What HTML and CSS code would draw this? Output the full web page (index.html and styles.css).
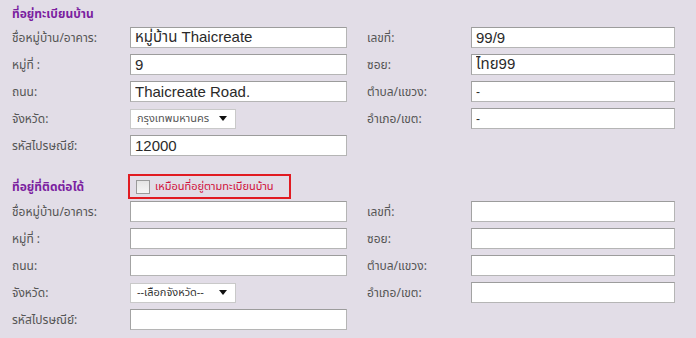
FILE: index.html
```html
<!DOCTYPE html>
<html lang="th">
<head>
<meta charset="utf-8">
<link rel="stylesheet" href="styles.css">
</head>
<body>
<div class="page">
  <section class="sec sec-home">
    <div class="sec-head">
      <h3 class="title">ที่อยู่ทะเบียนบ้าน</h3>
    </div>
    <div class="grid">
      <label class="lbl">ชื่อหมู่บ้าน/อาคาร:</label>
      <input class="txt" type="text" value="หมู่บ้าน Thaicreate">
      <span></span>
      <label class="lbl">เลขที่:</label>
      <input class="txt txt-r" type="text" value="99/9">

      <label class="lbl">หมู่ที่ :</label>
      <input class="txt" type="text" value="9">
      <span></span>
      <label class="lbl">ซอย:</label>
      <input class="txt txt-r" type="text" value="ไทย99">

      <label class="lbl">ถนน:</label>
      <input class="txt" type="text" value="Thaicreate Road.">
      <span></span>
      <label class="lbl">ตำบล/แขวง:</label>
      <input class="txt txt-r small" type="text" value="-">

      <label class="lbl">จังหวัด:</label>
      <div class="sel"><span class="sel-text thin">กรุงเทพมหานคร</span><span class="arrow"></span></div>
      <span></span>
      <label class="lbl">อำเภอ/เขต:</label>
      <input class="txt txt-r small" type="text" value="-">

      <label class="lbl">รหัสไปรษณีย์:</label>
      <input class="txt" type="text" value="12000">
    </div>
  </section>

  <section class="sec sec-contact">
    <div class="sec-head">
      <h3 class="title">ที่อยู่ที่ติดต่อได้</h3>
      <div class="same-box">
        <span class="chk"></span>
        <span class="same-text">เหมือนที่อยู่ตามทะเบียนบ้าน</span>
      </div>
    </div>
    <div class="grid">
      <label class="lbl">ชื่อหมู่บ้าน/อาคาร:</label>
      <input class="txt" type="text">
      <span></span>
      <label class="lbl">เลขที่:</label>
      <input class="txt txt-r" type="text">

      <label class="lbl">หมู่ที่ :</label>
      <input class="txt" type="text">
      <span></span>
      <label class="lbl">ซอย:</label>
      <input class="txt txt-r" type="text">

      <label class="lbl">ถนน:</label>
      <input class="txt" type="text">
      <span></span>
      <label class="lbl">ตำบล/แขวง:</label>
      <input class="txt txt-r" type="text">

      <label class="lbl">จังหวัด:</label>
      <div class="sel"><span class="sel-text">--เลือกจังหวัด--</span><span class="arrow"></span></div>
      <span></span>
      <label class="lbl">อำเภอ/เขต:</label>
      <input class="txt txt-r" type="text">

      <label class="lbl">รหัสไปรษณีย์:</label>
      <input class="txt" type="text">
    </div>
  </section>
</div>
</body>
</html>
```

FILE: styles.css
```css
html, body {
  margin: 0;
  padding: 0;
}
body {
  background: #e2dde7;
  font-family: Tahoma, "Noto Sans Thai", "Noto Sans", "DejaVu Sans", sans-serif;
  color: #555;
  width: 696px;
  height: 338px;
  overflow: hidden;
}
.page {
  padding: 0 0 0 12px;
}
.sec-head {
  display: flex;
  align-items: center;
}
.sec-home .sec-head {
  height: 27px;
}
.sec-contact {
  margin-top: 18px;
}
.sec-contact .sec-head {
  height: 25px;
  margin-bottom: 2px;
}
.title {
  margin: 0;
  font-size: 12px;
  font-weight: bold;
  color: #7b1fa0;
  width: 116px;
}
.same-box {
  display: flex;
  align-items: center;
  box-sizing: border-box;
  width: 163px;
  height: 25px;
  border: 2px solid #e11b22;
  padding-left: 6px;
}
.chk {
  width: 12px;
  height: 12px;
  border: 1px solid #9a9a9a;
  background: linear-gradient(#e4e4e4, #f6f6f6);
  margin-right: 5px;
}
.same-text {
  color: #d0103a;
  font-size: 11px;
}
.grid {
  display: grid;
  grid-template-columns: 118px 217px 20px 104px 204px;
  grid-auto-rows: 21px;
  row-gap: 6px;
  align-items: center;
}
.lbl {
  font-size: 12px;
  color: #555;
}
.txt {
  box-sizing: border-box;
  height: 21px;
  width: 100%;
  margin: 0;
  border: 1px solid #b5b5b5;
  border-top-color: #9c9c9c;
  border-left-color: #a3a3a3;
  background: #fff;
  padding: 0 4px;
  font-family: "Liberation Sans", Arial, "Noto Sans Thai", sans-serif;
  font-size: 15px;
  color: #2a2a2a;
  outline: none;
}
.txt.small {
  font-size: 12px;
}
.sel {
  box-sizing: border-box;
  width: 106px;
  height: 20px;
  background: #fff;
  border: 1px solid #c9c9c9;
  display: flex;
  align-items: center;
  justify-content: space-between;
  padding: 0 8px 0 6px;
}
.sel-text {
  font-size: 11px;
  color: #333;
  white-space: nowrap;
}
.sel-text.thin {
  color: #555;
}
.arrow {
  width: 0;
  height: 0;
  border-left: 4px solid transparent;
  border-right: 4px solid transparent;
  border-top: 5px solid #111;
}
```
